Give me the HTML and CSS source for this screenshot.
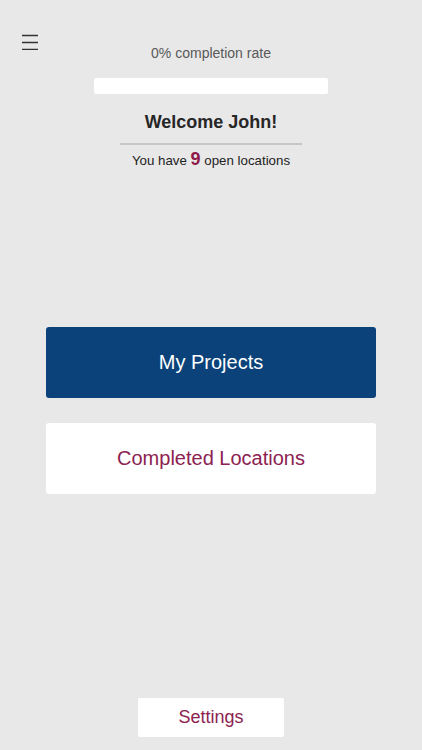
FILE: index.html
```html
<!DOCTYPE html>
<html lang="en">
<head>
    <meta charset="UTF-8">
    <meta name="viewport" content="width=device-width, initial-scale=1.0">
    <title>Dashboard</title>
    <link rel="stylesheet" href="styles.css">
</head>
<body>
    <div class="page">
        <header class="top">
            <button class="menu-btn" aria-label="Menu">
                <svg width="16" height="16" viewBox="0 0 16 16">
                    <path d="M0 1.5H16M0 8.5H16M0 15.5H16" stroke="#333" stroke-width="1.3" fill="none"/>
                </svg>
            </button>
            <div class="summary">
                <p class="rate">0% completion rate</p>
                <div class="progress"><div class="progress-fill" style="width: 0%"></div></div>
                <h1 class="welcome">Welcome John!</h1>
                <hr class="divider">
                <p class="open">You have <span class="count">9</span> open locations</p>
            </div>
        </header>

        <nav class="actions">
            <a class="action primary" href="#">My Projects</a>
            <a class="action secondary" href="#">Completed Locations</a>
        </nav>

        <footer class="bottom">
            <a class="settings" href="#">Settings</a>
        </footer>
    </div>
</body>
</html>
```

FILE: styles.css
```css
body {
    margin: 0;
    background-color: #e8e8e8;
    font-family: "Liberation Sans", Arial, sans-serif;
    color: #222;
}
.page {
    height: 750px;
    display: flex;
    flex-direction: column;
}
.top {
    display: grid;
    grid-template-columns: 60px 1fr 60px;
    padding-top: 34px;
}
.menu-btn {
    justify-self: start;
    margin-left: 22px;
    padding: 0;
    width: 16px;
    height: 16px;
    border: none;
    background: none;
    cursor: pointer;
}
.menu-btn svg {
    display: block;
}
.summary {
    display: flex;
    flex-direction: column;
    align-items: center;
    padding-top: 11px;
}
.rate {
    margin: 0;
    font-size: 14px;
    line-height: 16px;
    color: #595959;
}
.progress {
    width: 234px;
    height: 16px;
    margin-top: 17px;
    background-color: #fff;
    border-radius: 2px;
    overflow: hidden;
}
.progress-fill {
    height: 100%;
    background-color: #0b4279;
}
.welcome {
    margin: 17px 0 0;
    font-size: 18px;
    line-height: 22px;
    font-weight: bold;
    color: #262626;
}
.divider {
    width: 182px;
    height: 2px;
    margin: 10px 0 0;
    border: none;
    background-color: #c6c6c6;
}
.open {
    margin: 5px 0 0;
    font-size: 13.3px;
    line-height: 20px;
    color: #222;
}
.count {
    font-size: 18px;
    line-height: 1;
    font-weight: bold;
    color: #8e1848;
}
.actions {
    display: flex;
    flex-direction: column;
    align-items: center;
    gap: 25px;
    margin-top: 156px;
}
.action {
    display: flex;
    align-items: center;
    justify-content: center;
    width: 330px;
    height: 71px;
    border-radius: 3px;
    font-size: 20px;
    text-decoration: none;
}
.primary {
    background-color: #0b4279;
    color: #fff;
}
.secondary {
    background-color: #fff;
    color: #8c2251;
}
.bottom {
    margin-top: auto;
    display: flex;
    justify-content: center;
    padding-bottom: 13px;
}
.settings {
    display: flex;
    align-items: center;
    justify-content: center;
    width: 146px;
    height: 39px;
    background-color: #fff;
    border-radius: 2px;
    font-size: 18px;
    color: #8c2251;
    text-decoration: none;
}
```
